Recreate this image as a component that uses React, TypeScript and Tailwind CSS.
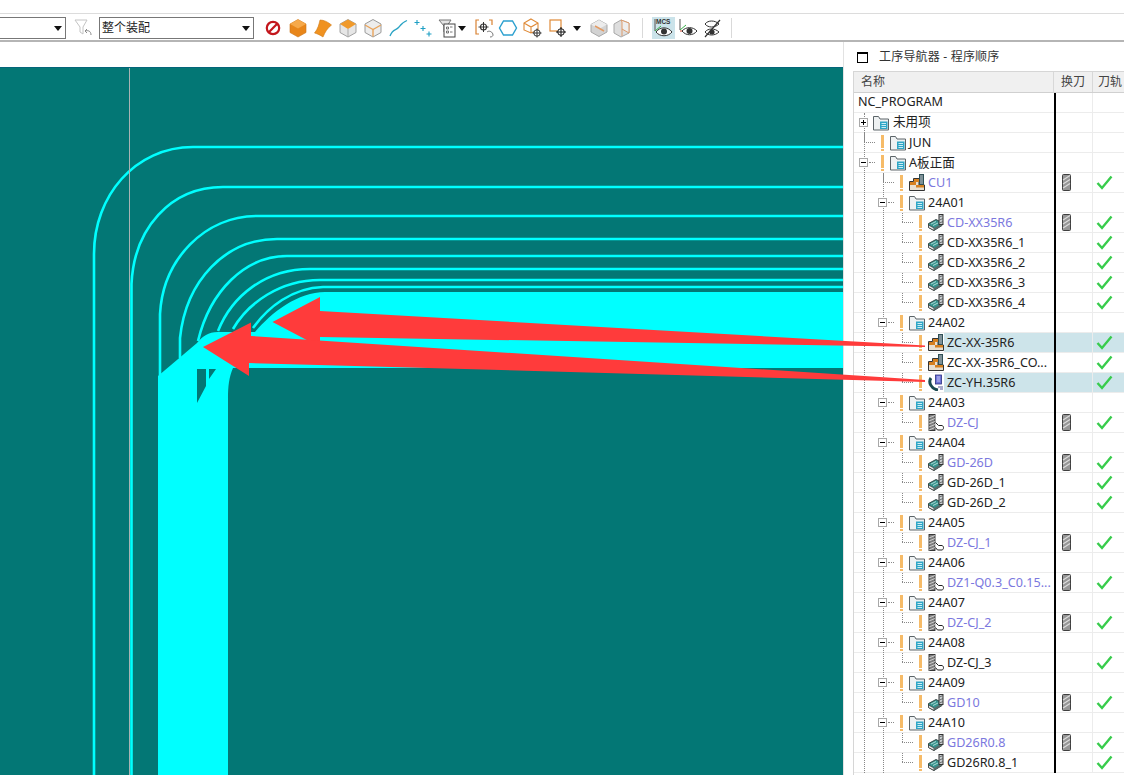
const cyan = "#00ffff";

type Kind = "folder" | "pocket" | "cavity" | "phone" | "profile";
type RowData = {
  name: string;
  level?: 0 | 1 | 2 | 3;
  kind?: Kind;
  toggle?: "+" | "-";
  purple?: boolean;
  tool?: boolean;
  check?: boolean;
  selected?: boolean;
};

const group = (name: string): RowData => ({ name, level: 2, kind: "folder", toggle: "-" });
const op = (name: string, kind: Kind, purple = false, selected = false): RowData => ({
  name,
  level: 3,
  kind,
  purple,
  tool: purple,
  check: true,
  selected,
});

const rows: RowData[] = [
  { name: "NC_PROGRAM", level: 0 },
  { name: "JUN", level: 1, kind: "folder" },
  { name: "A板正面", level: 1, kind: "folder", toggle: "-" },
  { name: "CU1", level: 2, kind: "pocket", purple: true, tool: true, check: true },
  group("24A01"),
  op("CD-XX35R6", "cavity", true),
  op("CD-XX35R6_1", "cavity"),
  op("CD-XX35R6_2", "cavity"),
  op("CD-XX35R6_3", "cavity"),
  op("CD-XX35R6_4", "cavity"),
  group("24A02"),
  op("ZC-XX-35R6", "pocket", false, true),
  op("ZC-XX-35R6_CO...", "pocket"),
  op("ZC-YH.35R6", "phone", false, true),
  group("24A03"),
  op("DZ-CJ", "profile", true),
  group("24A04"),
  op("GD-26D", "cavity", true),
  op("GD-26D_1", "cavity"),
  op("GD-26D_2", "cavity"),
  group("24A05"),
  op("DZ-CJ_1", "profile", true),
  group("24A06"),
  op("DZ1-Q0.3_C0.15...", "profile", true),
  group("24A07"),
  op("DZ-CJ_2", "profile", true),
  group("24A08"),
  op("DZ-CJ_3", "profile"),
  group("24A09"),
  op("GD10", "cavity", true),
  group("24A10"),
  op("GD26R0.8", "cavity", true),
  op("GD26R0.8_1", "cavity"),
];

function Caret() {
  return (
    <svg width="8" height="5" viewBox="0 0 8 5" className="shrink-0">
      <path d="M0 0H8L4 5Z" fill="#111" />
    </svg>
  );
}

function Select({ label, className }: { label?: string; className: string }) {
  return (
    <div className={`h-[22px] border border-[#777] bg-white flex items-center justify-between pl-[2px] pr-[3px] text-[12px] text-[#222] ${className}`}>
      <span>{label}</span>
      <Caret />
    </div>
  );
}

function Ico({ w = 22, children }: { w?: number; children: React.ReactNode }) {
  return (
    <svg width={w} height="22" viewBox={`0 0 ${w} 22`} className="shrink-0">
      {children}
    </svg>
  );
}

function ToolbarIcons() {
  return (
    <div className="flex items-center ml-[6px]">
      {/* no entry */}
      <div className="w-[25px] flex justify-center">
        <Ico>
          <circle cx="11" cy="11" r="6.2" fill="none" stroke="#c3161c" strokeWidth="2.2" />
          <path d="M6.8 15.2L15.2 6.8" stroke="#c3161c" strokeWidth="2.2" />
        </Ico>
      </div>
      {/* solid block */}
      <div className="w-[25px] flex justify-center">
        <Ico>
          <path d="M11 2.5L19 7V15.5L11 20L3 15.5V7Z" fill="#e8861a" stroke="#c9741a" strokeWidth="0.6" />
          <path d="M3 7L11 11.5L19 7L11 2.5Z" fill="#f6a94a" />
        </Ico>
      </div>
      {/* sheet face */}
      <div className="w-[25px] flex justify-center">
        <Ico>
          <path d="M8 3C12 3 16 5 19.5 8C15.5 11 13 15 11 20C8 18 6 17 2.5 16C6 12 7 7 8 3Z" fill="#f09220" stroke="#cf7a18" strokeWidth="0.6" />
        </Ico>
      </div>
      {/* block with orange top */}
      <div className="w-[25px] flex justify-center">
        <Ico>
          <path d="M11 2.5L19 7V15.5L11 20L3 15.5V7Z" fill="#e6e6e6" stroke="#8d8d8d" strokeWidth="0.8" />
          <path d="M3 7L11 12L19 7L11 2.5Z" fill="#f09a2c" />
          <path d="M11 12V19.5" stroke="#aaa" />
        </Ico>
      </div>
      {/* block with orange edges */}
      <div className="w-[25px] flex justify-center">
        <Ico>
          <path d="M11 2.5L19 7V15.5L11 20L3 15.5V7Z" fill="#ededed" stroke="#9a9a9a" strokeWidth="1" />
          <path d="M3 8L11 12.5L19 8" fill="none" stroke="#e8a35a" strokeWidth="1.4" />
          <path d="M11 12.5V19.5" stroke="#e8a35a" strokeWidth="1.4" />
        </Ico>
      </div>
      {/* curve */}
      <div className="w-[25px] flex justify-center">
        <Ico>
          <path d="M3 19C6 11 9 14 12 10C14 7 16 5 20 3.5" fill="none" stroke="#2aa3c4" strokeWidth="1.3" />
        </Ico>
      </div>
      {/* points */}
      <div className="w-[25px] flex justify-center">
        <Ico>
          <path d="M5 3V8M2.5 5.5H7.5M11 9V14M8.5 11.5H13.5M17 14.5V19.5M14.5 17H19.5" stroke="#1e9fc4" strokeWidth="1.1" />
        </Ico>
      </div>
      {/* filter + sheet */}
      <div className="w-[23px] flex justify-center">
        <Ico>
          <path d="M3 3H15L11 9V15H8V9Z" fill="#e5e5e5" stroke="#777" />
          <rect x="8" y="7" width="11" height="13" fill="#fff" stroke="#444" />
          <path d="M10.5 10H12.5V12H10.5ZM14 10H16.5M10.5 14H12.5V16H10.5ZM14 15H16.5" fill="none" stroke="#555" strokeWidth="0.8" />
        </Ico>
      </div>
      <div className="w-[7px] flex justify-center mr-[7px]"><Caret /></div>
      {/* bracket with target */}
      <div className="w-[24px] flex justify-center">
        <Ico>
          <path d="M6 3H3V17H6M16 3H19V8" fill="none" stroke="#d98232" strokeWidth="1.2" />
          <circle cx="10.5" cy="10" r="3" fill="none" stroke="#333" strokeWidth="1.1" />
          <path d="M10.5 5V15M5.5 10H15.5" stroke="#333" />
          <path d="M14 15C16 13 20 15 20 18C20 19 19 20 17 20" fill="none" stroke="#777" />
        </Ico>
      </div>
      {/* hexagon */}
      <div className="w-[24px] flex justify-center">
        <Ico>
          <path d="M6.5 4H15.5L19.5 11L15.5 18H6.5L2.5 11Z" fill="none" stroke="#2ba0cf" strokeWidth="1.4" />
        </Ico>
      </div>
      {/* box + crosshair */}
      <div className="w-[26px] flex justify-center">
        <Ico>
          <path d="M9 2L16 6V13L9 16L2 13V6ZM2 6L9 10L16 6M9 10V16" fill="none" stroke="#df8a37" strokeWidth="1.1" />
          <circle cx="15" cy="16" r="3.2" fill="#fff" stroke="#333" />
          <path d="M15 11.5V20.5M10.5 16H19.5" stroke="#333" />
        </Ico>
      </div>
      {/* face + crosshair */}
      <div className="w-[24px] flex justify-center">
        <Ico>
          <rect x="3" y="3" width="11" height="11" fill="none" stroke="#df8a37" strokeWidth="1.2" />
          <circle cx="14" cy="15" r="3.3" fill="#fff" stroke="#111" />
          <path d="M14 10V20M9 15H19" stroke="#111" />
        </Ico>
      </div>
      <div className="w-[14px] flex justify-center"><Caret /></div>
      {/* greyed blocks */}
      <div className="w-[24px] ml-[3px] flex justify-center">
        <Ico>
          <path d="M11 3L19 7.5V15L11 19.5L3 15V7.5Z" fill="#d3d3d3" stroke="#a8a8a8" />
          <path d="M3 7.5L11 3L19 7.5L11 12Z" fill="#ececec" />
          <path d="M7 9L16 14" stroke="#e39a62" strokeWidth="1.5" />
        </Ico>
      </div>
      <div className="w-[22px] flex justify-center">
        <Ico>
          <path d="M10 3L18 6V16L10 20L3 16V7Z" fill="#dedede" stroke="#a8a8a8" />
          <path d="M10 3L18 6V16L11 12V5Z" fill="#eee" stroke="#dd9a6a" />
          <path d="M11 12V19" stroke="#dd9a6a" />
        </Ico>
      </div>
      <div className="w-px h-[20px] bg-[#d9d9d9] ml-[9px] mr-[9px]" />
      {/* MCS eye */}
      <div className="w-[23px] h-[22px] bg-[#cbe3ea] flex justify-center">
        <Ico w={23}>
          <text x="4" y="7" fontSize="6.5" fontWeight="700" fill="#333" fontFamily="Liberation Sans, sans-serif">MCS</text>
          <path d="M3 2V14" stroke="#555" />
          <path d="M3 14L9 9" stroke="#38b24a" />
          <path d="M4 15C8 9.5 16 9.5 20 15C16 20 8 20 4 15Z" fill="#fff" stroke="#333" />
          <circle cx="12" cy="14.5" r="3" fill="#333" />
        </Ico>
      </div>
      <div className="w-[24px] ml-[1px] flex justify-center">
        <Ico>
          <path d="M3 2V13" stroke="#555" />
          <path d="M3 13L9 8" stroke="#38b24a" />
          <path d="M3 14H8" stroke="#d0402c" />
          <path d="M5 14C9 9.5 16 9.5 20 14C16 19 9 19 5 14Z" fill="#fff" stroke="#333" />
          <circle cx="12.5" cy="14" r="3" fill="#333" />
        </Ico>
      </div>
      <div className="w-[24px] flex justify-center">
        <Ico>
          <path d="M4 7C7 3 14 3 18 7C14 11 7 11 4 7Z" fill="#fff" stroke="#333" />
          <path d="M4 15C7 11 14 11 18 15C14 19 7 19 4 15Z" fill="#fff" stroke="#333" />
          <circle cx="11" cy="15" r="2.6" fill="#333" />
          <path d="M4 20L19 3" stroke="#333" strokeWidth="1.2" />
        </Ico>
      </div>
      <div className="w-px h-[20px] bg-[#d9d9d9] ml-[7px]" />
    </div>
  );
}

function Canvas() {
  return (
    <svg viewBox="0 67 843 708" className="block w-[843px] h-[708px]">
      <g fill="none" stroke={cyan} strokeWidth="2.6">
        <path d="M94 775V253C94 195 135 146 193 146H843" />
        <path d="M131.5 775V283C134 228 170 186 223 186H843" />
        <path d="M160 375V313C163 258 205 215 257 215H843" />
        <path d="M180 357V337C186 280 225 238 277 238H843" />
        <path d="M198 340C210 290 245 255 287 255H843" />
        <path d="M218 330C232 295 265 268 310 268H843" />
        <path d="M233 328C248 302 280 279 320 279H843" />
        <path d="M253 327C268 306 292 287 323 286H843" />
      </g>
      <path
        d="M158 775V375L197 342C203 335 208 331 218 331H255C272 311 298 291 325 291H843V367H233C229 376 228 386 228 397V775Z"
        fill={cyan}
      />
      <path d="M197 368H206V385L197 402ZM209 368H216L209 378Z" fill="#037775" />
      <path d="M129.5 67V775" stroke="#a9b3b3" strokeWidth="1" />
    </svg>
  );
}

function Folder() {
  return (
    <svg width="16" height="16" viewBox="0 0 16 16">
      <path d="M0.5 15V1.5H5.5L7 4H15.5V15Z" fill="#eef1f2" stroke="#5c6468" />
      <rect x="7" y="6.5" width="7.5" height="7.5" fill="#2fa6c6" />
      <path d="M8.5 8.5H13M8.5 10.5H13M8.5 12.5H13" stroke="#dff3f8" strokeWidth="0.9" />
    </svg>
  );
}

function Pocket() {
  return (
    <svg width="16" height="17" viewBox="0 0 16 17">
      <path d="M0.5 16.5V7.5H4.5V4.5H10V11H15.5V16.5Z" fill="#e8dfd0" stroke="#333" />
      <path d="M5 5H10V8H5ZM1 8H7V11H1Z" fill="#d6801f" />
      <path d="M7 11H15V13.5H7Z" fill="#d6801f" />
      <rect x="10.5" y="0.5" width="4" height="10" fill="#7f9198" stroke="#2f5056" />
    </svg>
  );
}

function Cavity() {
  return (
    <svg width="16" height="17" viewBox="0 0 16 17">
      <path d="M0.5 9.5L8 5.5L14 8.5V11.5L6 16.5L0.5 13.5Z" fill="#37918c" stroke="#2c3a3a" strokeWidth="0.9" />
      <path d="M0.5 11L6 14V16.5L0.5 13.5Z" fill="#e8e8e8" stroke="#333" strokeWidth="0.7" />
      <path d="M6 14L14 9.5V11.5L6 16.5Z" fill="#5a6a6a" />
      <path d="M3 10L8 7.5M5 11.5L10 9" stroke="#b7e0dc" strokeWidth="0.9" />
      <rect x="11" y="0.5" width="4" height="10" fill="#c9cfd2" stroke="#333" />
      <path d="M11.5 3L15 1.5M11.5 6L15 4.5M11.5 9L15 7.5" stroke="#555" strokeWidth="0.8" />
    </svg>
  );
}

function Phone() {
  return (
    <svg width="16" height="17" viewBox="0 0 16 17">
      <path d="M3 4C0 8 3 15 10 16" fill="none" stroke="#1a4a50" strokeWidth="3" />
      <rect x="7.5" y="1" width="6" height="9" fill="#6f74d8" stroke="#2a2f80" strokeWidth="0.8" />
      <path d="M9 3H12M9 5H12M9 7H12" stroke="#e6e7ff" strokeWidth="0.7" />
      <path d="M10 13H15M12 15H15" stroke="#2a2f80" strokeWidth="0.8" />
    </svg>
  );
}

function Profile() {
  return (
    <svg width="16" height="17" viewBox="0 0 16 17">
      <rect x="1" y="0.5" width="6" height="16" fill="#7e7e7e" stroke="#2a2a2a" strokeWidth="0.9" />
      <path d="M1 4L7 1.5M1 7L7 4.5M1 10L7 7.5M1 13L7 10.5M1 16L7 13.5" stroke="#d6d6d6" strokeWidth="0.9" />
      <path d="M7.5 8.5L10.5 11.5H14C16 12 16 15.5 14 16H9.5L7.5 13.5" fill="#fff" stroke="#222" strokeWidth="1" />
    </svg>
  );
}

function KindIcon({ kind }: { kind: Kind }) {
  if (kind === "folder") return <Folder />;
  if (kind === "pocket") return <Pocket />;
  if (kind === "cavity") return <Cavity />;
  if (kind === "phone") return <Phone />;
  return <Profile />;
}

function Toggle({ sign }: { sign: "+" | "-" }) {
  return (
    <span className="absolute left-[5px] top-[5px] w-[9px] h-[9px] bg-white border border-[#a8a8a8] flex items-center justify-center">
      <span className="absolute w-[5px] h-px bg-black" />
      {sign === "+" && <span className="absolute w-px h-[5px] bg-black" />}
    </span>
  );
}

function Row({ row }: { row: RowData }) {
  const level = row.level ?? 0;
  const bg = row.selected ? "bg-[#cde4ea]" : "";
  const pad = level === 3 ? "pl-[38px]" : level === 2 ? "pl-[19px]" : "pl-0";

  return (
    <div className="flex h-[20px] border-b border-[#ececec] box-border">
      <div className={`w-[200px] flex items-center overflow-hidden ${pad}`}>
        {level === 0 ? (
          <span className="pl-[4px] text-[#222]">{row.name}</span>
        ) : (
          <>
            <div className="relative w-[24px] h-[19px] shrink-0">
              {row.toggle ? (
                <>
                  <Toggle sign={row.toggle} />
                  <span className="absolute left-[15px] top-[9px] w-[6px] border-t border-dotted border-[#888]" />
                </>
              ) : (
                <>
                  <span className="absolute left-[10px] -top-[1px] h-[10px] border-l border-dotted border-[#888]" />
                  <span className="absolute left-[10px] top-[9px] w-[11px] border-t border-dotted border-[#888]" />
                </>
              )}
            </div>
            <div className="w-[12px] shrink-0 flex flex-col items-start gap-[1px]">
              <span className="ml-[3px] w-[2.5px] h-[13px] bg-[#f6bb68]" />
              <span className="ml-[3px] w-[2.5px] h-[2px] bg-[#f6bb68]" />
            </div>
            <div className="w-[16px] h-[17px] shrink-0 flex items-center">
              {row.kind && <KindIcon kind={row.kind} />}
            </div>
            <span className={`flex-1 h-[19px] pl-[3px] leading-[19px] whitespace-nowrap ${bg} ${row.purple ? "text-[#7b78de]" : "text-[#222]"}`}>
              {row.name}
            </span>
          </>
        )}
      </div>
      <div className={`w-[30px] border-r border-[#ececec] flex items-center pl-[8px] box-content ${bg}`}>
        {row.tool && (
          <svg width="9" height="17" viewBox="0 0 9 17">
            <rect x="0.5" y="0.5" width="8" height="16" rx="1" fill="#969696" stroke="#3f3f3f" />
            <path d="M1 6L8 1.5M1 10L8 5.5M1 14L8 9.5" stroke="#dcdcdc" strokeWidth="1.2" />
          </svg>
        )}
      </div>
      <div className={`flex-1 flex items-center pl-[3px] ${bg}`}>
        {row.check && (
          <svg width="17" height="15" viewBox="0 0 17 15">
            <path d="M1.5 8L6 13L15.5 1.5" fill="none" stroke="#38cc4c" strokeWidth="2.4" />
          </svg>
        )}
      </div>
    </div>
  );
}

function Navigator() {
  return (
    <div className="w-[281px] border-l border-[#e2e2e2] bg-white flex flex-col overflow-hidden">
      <div className="h-[29px] shrink-0 flex items-center pl-[13px] pt-[1px]">
        <span className="w-[11px] h-[11px] border border-black border-t-2" />
        <span className="ml-[11px] text-[12px] text-[#333] tracking-[0.2px]">工序导航器 - 程序顺序</span>
      </div>
      <div className="ml-[9px] flex-1 border-l border-t border-[#d6d6d6] overflow-hidden">
        <div className="flex h-[20px] bg-[#f0f0f0] border-b border-[#d0d0d0] box-content text-[12px] text-[#444]">
          <div className="w-[200px] pl-[7px] leading-[20px] border-r border-[#d8d8d8]">名称</div>
          <div className="w-[31px] pl-[7px] leading-[20px] border-r border-[#d8d8d8] box-content whitespace-nowrap">换刀</div>
          <div className="flex-1 pl-[5px] leading-[20px] whitespace-nowrap">刀轨</div>
        </div>
        <div className="relative">
          {/* tree guides */}
          <span className="absolute left-[10px] top-[20px] bottom-0 border-l border-dotted border-[#888]" />
          <span className="absolute left-[29px] top-[80px] bottom-0 border-l border-dotted border-[#888]" />
          <span className="absolute left-[200px] top-0 bottom-0 w-[1.5px] bg-black z-10" />
          <Row row={rows[0]} />
          <div className="flex h-[20px] border-b border-[#ececec] box-border">
            <div className="relative w-[200px] flex items-center">
              <div className="relative w-[19px] h-[19px] shrink-0"><Toggle sign="+" /></div>
              <Folder />
              <span className="ml-[4px] text-[#222]">未用项</span>
            </div>
            <div className="w-[38px] border-r border-[#ececec] box-content" />
          </div>
          {rows.slice(1).map((row, idx) => (
            <Row key={idx} row={row} />
          ))}
        </div>
      </div>
    </div>
  );
}

export default function App() {
  return (
    <div className="relative w-[1124px] h-[775px] overflow-hidden bg-white flex flex-col font-['Noto_Sans','Noto_Sans_CJK_SC',sans-serif] text-[12.6px]">
      <div className="h-[14px] shrink-0 border-b border-[#dcdcdc]" />
      <div className="h-[28px] shrink-0 border-b-2 border-[#b5b5b5] flex items-center pt-[2px]">
        <Select className="w-[66px] border-l-0" />
        <div className="w-[33px] flex justify-center">
          <Ico>
            <path d="M3 3H15L11 10V17L8 15V10Z" fill="#fff" stroke="#c4c4c4" />
            <path d="M19 18C19 14 16 13 13 14M13 14L15 12M13 14L15 16" fill="none" stroke="#8a8a8a" />
          </Ico>
        </div>
        <Select label="整个装配" className="w-[155px]" />
        <ToolbarIcons />
      </div>
      <div className="flex-1 flex min-h-0">
        <div className="w-[843px] flex flex-col">
          <div className="h-[25px] shrink-0 bg-white" />
          <div className="flex-1 bg-[#037775] border-t border-[#05657a] overflow-hidden">
            <Canvas />
          </div>
        </div>
        <Navigator />
      </div>
      {/* red arrows drawn over the screenshot */}
      <svg viewBox="0 0 1124 775" className="absolute inset-0 w-[1124px] h-[775px] pointer-events-none z-20">
        <path d="M272.5 322L320 297V311L925 345.5V347L320 337V347Z" fill="#ff3b3b" />
        <path d="M203 347L251 322.5V336L925 380V382L249 363V376Z" fill="#ff3b3b" />
      </svg>
    </div>
  );
}
